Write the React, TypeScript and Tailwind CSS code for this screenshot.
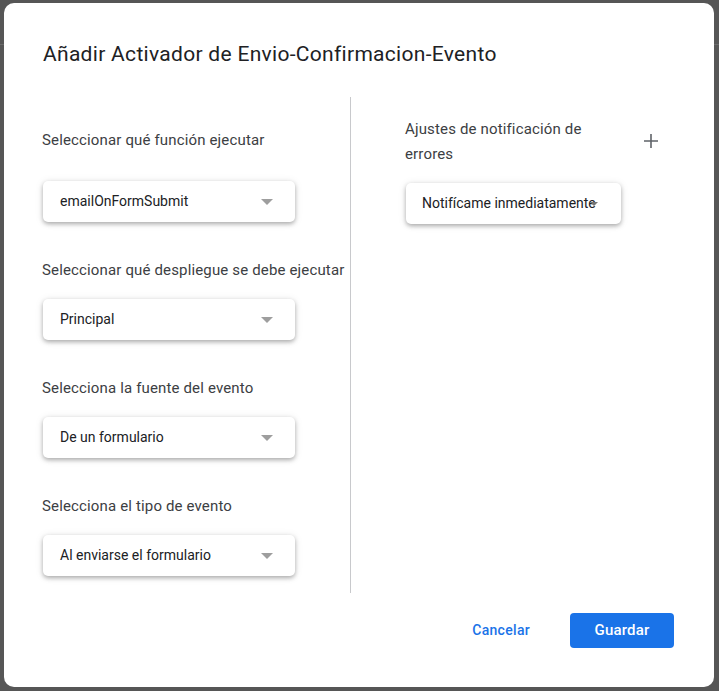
/**
 * Diálogo "Añadir Activador" (Apps Script).
 */

const FIELDS = [
  { label: 'Seleccionar qué función ejecutar', value: 'emailOnFormSubmit' },
  { label: 'Seleccionar qué despliegue se debe ejecutar', value: 'Principal' },
  { label: 'Selecciona la fuente del evento', value: 'De un formulario' },
  { label: 'Selecciona el tipo de evento', value: 'Al enviarse el formulario' },
]

function Caret({ className = '' }: { className?: string }) {
  return (
    <svg width="12" height="6" viewBox="0 0 12 6" className={className}>
      <path d="M0 0h12L6 6z" fill="#9e9e9e" />
    </svg>
  )
}

function SelectBox({ value, width }: { value: string; width: string }) {
  return (
    <div className={`${width} h-[41px] flex items-center rounded-[5px] bg-white shadow-[0_2px_4px_rgba(0,0,0,0.28),0_1px_9px_rgba(0,0,0,0.1)]`}>
      <span className="pl-[17px] text-[14px] text-[#202124] flex-1">{value}</span>
      <Caret className="mr-[22px]" />
    </div>
  )
}

export default function App() {
  return (
    <div
      className="w-full h-[691px] pt-[3px] pl-[4px] bg-[linear-gradient(to_bottom,#565656_0,#565656_44px,#6b6b6b_44px,#6b6b6b_45px,#565656_45px)]"
      style={{ fontFamily: 'Roboto, "Liberation Sans", sans-serif' }}
    >
      <div className="w-[710px] h-[684px] bg-white rounded-[10px] flex flex-col">
        {/* Título */}
        <h1 className="mt-[37px] ml-[39px] text-[21px] leading-[28px] tracking-[0.3px] text-[#202124]">
          Añadir Activador de Envio-Confirmacion-Evento
        </h1>

        {/* Columnas */}
        <div className="flex mt-[29px] ml-[38px]">
          <div className="w-[309px] border-r border-[#c8c9cc] h-[496px] pt-[33px]">
            {FIELDS.map((f, i) => (
              <div key={f.label} className={i > 0 ? 'mt-[38px]' : ''}>
                <p className="text-[15px] leading-[20px] tracking-[0.15px] text-[#3c4043] whitespace-nowrap">{f.label}</p>
                <div className={`${i === 0 ? 'mt-[31px]' : 'mt-[19px]'} ml-[1px]`}>
                  <SelectBox value={f.value} width="w-[252px]" />
                </div>
              </div>
            ))}
          </div>

          <div className="pl-[54px] pt-[20px]">
            <div className="flex w-[257px] justify-between">
              <p className="w-[200px] text-[15px] leading-[25px] tracking-[0.15px] text-[#3c4043]">
                Ajustes de notificación de errores
              </p>
              <svg width="16" height="16" viewBox="0 0 16 16" className="mt-[16px] mr-[3px]">
                <path d="M8 1v14M1 8h14" stroke="#5f6368" strokeWidth="1.6" />
              </svg>
            </div>
            <div className="mt-[16px] ml-[1px] w-[215px] h-[41px] flex items-center rounded-[5px] bg-white shadow-[0_2px_4px_rgba(0,0,0,0.28),0_1px_9px_rgba(0,0,0,0.1)]">
              <span className="pl-[16px] text-[14px] text-[#202124] whitespace-nowrap">Notifícame inmediatamente</span>
              <svg width="8" height="4" viewBox="0 0 8 4" className="-ml-[6px] mt-[1px]">
                <path d="M0 0h8L4 4z" fill="#757575" />
              </svg>
            </div>
          </div>
        </div>

        {/* Botones */}
        <div className="flex items-center justify-end mt-[20px] mr-[40px] gap-[40px]">
          <button className="text-[14px] font-medium text-[#1a73e8] tracking-[0.3px]">Cancelar</button>
          <button className="w-[104px] h-[35px] rounded-[4px] bg-[#1a73e8] text-white text-[15px] font-medium tracking-[0.2px]">
            Guardar
          </button>
        </div>
      </div>
    </div>
  )
}
